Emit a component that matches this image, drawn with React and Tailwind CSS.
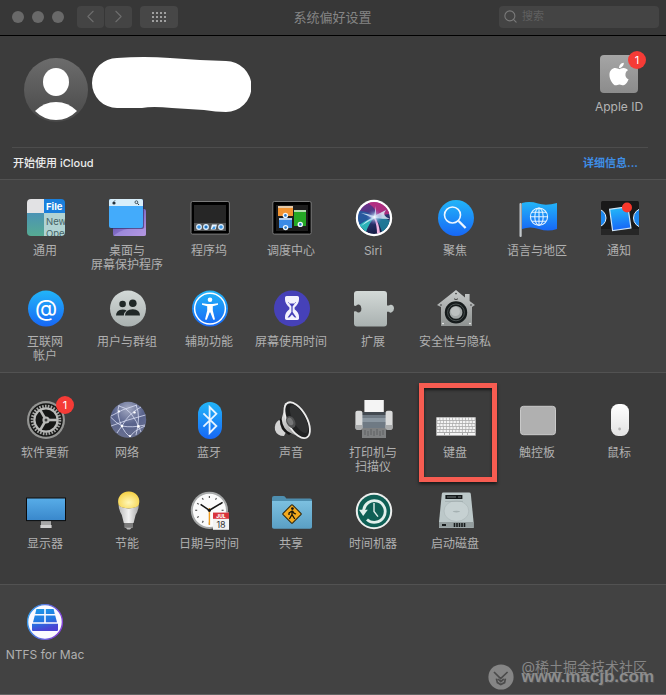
import { FaApple } from 'react-icons/fa';
import { ChevronLeft, ChevronRight, Search } from 'lucide-react';

const svgProps = { viewBox: '0 0 40 40', className: 'w-10 h-10 overflow-visible', 'aria-hidden': true };

function polar(cx, cy, r, deg) {
  const a = (deg * Math.PI) / 180;
  return [cx + r * Math.sin(a), cy - r * Math.cos(a)];
}

function BlueGradient({ id }) {
  return (
    <linearGradient id={id} x1="0" y1="0" x2="0" y2="1">
      <stop offset="0" stopColor="#22b5f8" />
      <stop offset="1" stopColor="#1767f6" />
    </linearGradient>
  );
}

function GrayGradient({ id }) {
  return (
    <linearGradient id={id} x1="0" y1="0" x2="0" y2="1">
      <stop offset="0" stopColor="#d3d9d7" />
      <stop offset="1" stopColor="#a9b1b0" />
    </linearGradient>
  );
}

function GeneralIcon() {
  return (
    <svg {...svgProps}>
      <defs>
        <clipPath id="general-clip"><rect x="1" y="1" width="38" height="37" rx="4" /></clipPath>
        <linearGradient id="general-left" x1="0" y1="0" x2="0" y2="1">
          <stop offset="0" stopColor="#4b93b4" />
          <stop offset="1" stopColor="#56ab93" />
        </linearGradient>
      </defs>
      <g clipPath="url(#general-clip)">
        <rect x="1" y="1" width="17" height="14" fill="#e2e2e4" />
        <rect x="18" y="1" width="21" height="14" fill="#1a7fdc" />
        <rect x="1" y="15" width="17" height="23" fill="url(#general-left)" />
        <rect x="18" y="15" width="21" height="23" fill="#b1d3d3" />
        <g fontFamily="Inter, sans-serif" fontSize="9.5">
          <text x="20" y="12" fill="#fff" fontWeight="700">File</text>
          <text x="20" y="27" fill="#476466">New</text>
          <text x="20" y="39" fill="#476466">Open</text>
        </g>
      </g>
    </svg>
  );
}

function DesktopIcon() {
  return (
    <svg {...svgProps}>
      <defs>
        <linearGradient id="desk-back" x1="0" y1="0" x2="1" y2="1">
          <stop offset="0" stopColor="#4b3f99" />
          <stop offset="0.6" stopColor="#8d76cf" />
          <stop offset="1" stopColor="#c193dc" />
        </linearGradient>
      </defs>
      <rect x="5" y="11" width="33" height="27" rx="2" fill="url(#desk-back)" />
      <path d="M5 38 Q16 28 38 30 V36 Q38 38 36 38Z" fill="#ab9ae4" opacity=".6" />
      <rect x="2" y="2" width="34" height="29" rx="2" fill="#2b2860" opacity=".6" />
      <rect x="1" y="1" width="34" height="29" rx="2" fill="#43abfb" />
      <path d="M3 1H33Q35 1 35 3V8H1V3Q1 1 3 1Z" fill="#d8eefa" />
      <circle cx="6" cy="5" r="1.6" fill="#25323c" />
      <path d="M6 3.4 7 2.4" stroke="#25323c" strokeWidth=".8" />
      <circle cx="28.4" cy="4.2" r="1.4" fill="none" stroke="#25323c" strokeWidth=".8" />
      <path d="M29.5 5.3 31 7" stroke="#25323c" strokeWidth="1" />
    </svg>
  );
}

function DockIcon() {
  return (
    <svg {...svgProps}>
      <rect x="1" y="3.5" width="38.4" height="32.6" rx="1.5" fill="#000" stroke="#7b7b7b" />
      <rect x="4" y="7" width="32" height="26" fill="#262626" />
      <rect x="4" y="25" width="32" height="8" fill="#545657" />
      {[9, 16, 31].map((x) => (
        <g key={x}>
          <circle cx={x} cy="29" r="2.9" fill="#e6f3ff" />
          <circle cx={x} cy="29" r="1.8" fill="#3c97e6" />
        </g>
      ))}
      <circle cx="16" cy="29" r="1" fill="#1c5f9f" />
      <path d="M22 26.5H27L25.6 31.6H20.6Z" fill="#e6f3ff" />
      <path d="M23.4 28.6H25.6L24.8 31H22Z" fill="#3c97e6" />
    </svg>
  );
}

function MissionIcon() {
  return (
    <svg {...svgProps}>
      <rect x=".8" y="3.5" width="38.4" height="32.6" rx="1.5" fill="#000" stroke="#7b7b7b" />
      <rect x="4" y="7" width="32" height="26" fill="#1d1d1d" />
      <rect x="6" y="8" width="15" height="10" fill="#f19331" />
      <rect x="6" y="8" width="15" height="2" fill="#e3c9a9" />
      <rect x="7" y="20" width="13" height="10" fill="#3a8ae6" />
      <rect x="7" y="20" width="13" height="2" fill="#b5cfec" />
      <rect x="22" y="12" width="12" height="16" fill="#25a825" />
      <rect x="22" y="12" width="12" height="2" fill="#b5dcb0" />
      {[[13.4, 17.4], [13.6, 29.6], [28.3, 26.4]].map(([x, y]) => (
        <g key={x}>
          <circle cx={x} cy={y} r="2.7" fill="#eef6fd" />
          <circle cx={x} cy={y} r="1.3" fill="#2a7cc9" />
        </g>
      ))}
    </svg>
  );
}

function SiriIcon() {
  return (
    <svg {...svgProps}>
      <defs>
        <radialGradient id="siri-core" cx=".5" cy=".5" r=".5">
          <stop offset="0" stopColor="#fff" />
          <stop offset=".35" stopColor="#c8d7f5" stopOpacity=".6" />
          <stop offset="1" stopColor="#6b5bd0" stopOpacity="0" />
        </radialGradient>
        <linearGradient id="siri-bg" x1=".2" y1="0" x2=".6" y2="1">
          <stop offset="0" stopColor="#7a2b8c" />
          <stop offset=".45" stopColor="#35407f" />
          <stop offset="1" stopColor="#131a42" />
        </linearGradient>
        <clipPath id="siri-clip"><circle cx="20" cy="20" r="16" /></clipPath>
      </defs>
      <circle cx="20" cy="20" r="18.2" fill="#fff" />
      <g clipPath="url(#siri-clip)">
        <circle cx="20" cy="20" r="16" fill="url(#siri-bg)" />
        <path d="M12 4Q27 1 34 10Q36 13 35 16L21 18Q24 10 12 4Z" fill="#c72c80" opacity=".8" />
        <path d="M4 13Q13 12 20 19L7 29Q2 22 4 13Z" fill="#2260a5" opacity=".8" />
        <path d="M5 27Q14 21 21 19Q15 25 12 34Z" fill="#2bc9c4" opacity=".85" />
        <path d="M21 19Q31 19 36 23Q33 32 28 34Q26 26 21 19Z" fill="#1f8ba5" opacity=".8" />
        <path d="M21 19Q25 25 26 35L23 36Q23 27 20 20Z" fill="#f1b5e2" />
        <path d="M7 15Q15 16 20 18L22 8 22 17 32 12Q27 18 36 21Q27 21 21 20Q13 24 7 28Q13 22 18 20Q13 17 7 15Z" fill="#d9f0fa" opacity=".85" />
        <circle cx="20.5" cy="19" r="8" fill="url(#siri-core)" />
      </g>
    </svg>
  );
}

function SpotlightIcon() {
  return (
    <svg {...svgProps}>
      <defs><BlueGradient id="spot-bg" /></defs>
      <circle cx="20" cy="20" r="18" fill="url(#spot-bg)" />
      <g fill="none" stroke="#eef6ff">
        <circle cx="16.5" cy="17" r="8" strokeWidth="1.6" />
        <path d="M22.6 23 29.6 30" strokeWidth="2.4" />
      </g>
    </svg>
  );
}

function LanguageIcon() {
  return (
    <svg {...svgProps}>
      <defs><BlueGradient id="flag-bg" /></defs>
      <rect x="1.5" y="5" width="2.2" height="34" rx="1" fill="#c3c8cb" />
      <path d="M4 6Q12 4 20 6.5T39 6V32Q30 35 21 32T4 32Z" transform="translate(0 -1)" fill="url(#flag-bg)" />
      <g fill="none" stroke="#e3f2ff" strokeWidth="1.1">
        <circle cx="21" cy="18.7" r="8.6" />
        <ellipse cx="21" cy="18.7" rx="4.2" ry="8.6" />
        <path d="M21 10V27.4M12.4 18.7H29.6M13.8 14.2H28.2M13.8 23.2H28.2" />
      </g>
    </svg>
  );
}

function NotificationIcon() {
  return (
    <svg {...svgProps}>
      <defs>
        <BlueGradient id="notif-bg" />
        <clipPath id="notif-clip"><rect x="1" y="3" width="38" height="34" rx="1.5" /></clipPath>
      </defs>
      <g clipPath="url(#notif-clip)">
        <rect x="1" y="3" width="38" height="34" fill="#191919" />
        <rect x="1" y="31" width="38" height="6" fill="#262626" />
        <circle cx="-3" cy="20" r="9" fill="#1c87ef" stroke="#e1edf8" strokeWidth="1" />
        <circle cx="43" cy="20" r="9.5" fill="#1c87ef" stroke="#e1edf8" strokeWidth="1" />
        <rect x="11" y="10" width="18.5" height="21.5" fill="url(#notif-bg)" stroke="#cfe4f5" strokeWidth="1.2" transform="rotate(-8 20 20.6)" />
      </g>
      <circle cx="27" cy="9.5" r="5" fill="#f8382c" />
    </svg>
  );
}

function InternetIcon() {
  return (
    <svg {...svgProps}>
      <defs><BlueGradient id="at-bg" /></defs>
      <circle cx="20" cy="19.6" r="18" fill="url(#at-bg)" />
      <text x="20" y="27" textAnchor="middle" fontFamily="Inter, sans-serif" fontSize="23" fill="#fff">@</text>
    </svg>
  );
}

function UsersIcon() {
  return (
    <svg {...svgProps}>
      <defs><GrayGradient id="users-bg" /></defs>
      <circle cx="20" cy="19.6" r="18" fill="url(#users-bg)" />
      <g fill="#202827">
        <circle cx="14.6" cy="15" r="3.3" />
        <path d="M8 26.5Q8 21 14.6 20.4Q17 20.4 18.6 21.6Q16 23.4 15.8 26.5Z" />
        <circle cx="24.8" cy="14.2" r="3.8" />
        <path d="M17 26.6Q17 20.6 24.8 20.2Q32 20.6 32 26.6Z" />
      </g>
    </svg>
  );
}

function AccessibilityIcon() {
  return (
    <svg {...svgProps}>
      <defs><BlueGradient id="access-bg" /></defs>
      <circle cx="20" cy="19.6" r="18" fill="url(#access-bg)" />
      <circle cx="20" cy="19.6" r="15.4" fill="none" stroke="#fff" strokeWidth="1.5" />
      <circle cx="20" cy="10.8" r="2.3" fill="#fff" />
      <path d="M12 14.2 17.6 15H22.4L28 14.2V15.8L22.8 17.2V21.6L25 30.4 23.2 30.8 20.4 23.6H19.6L16.8 30.8 15 30.4 17.2 21.6V17.2L12 15.8Z" fill="#fff" />
    </svg>
  );
}

function ScreenTimeIcon() {
  return (
    <svg {...svgProps}>
      <circle cx="20" cy="19.4" r="18" fill="#4641b8" />
      <path d="M13 8.6Q13 7 14.6 7H25.4Q27 7 27 8.6V10.6Q27 14.6 22.6 18.4V20.2Q27 23.4 27 28V29.6Q27 31 25.4 31H14.6Q13 31 13 29.6V28Q13 23.4 17.4 20.2V18.4Q13 14.6 13 10.6Z" fill="#f3f2fd" />
      <path d="M16 13H24L20.6 17.4V23L24.4 28.6H15.6L19.4 23V17.4Z" fill="#4641b8" />
      <path d="M16 12H24L22.6 14.6H17.4ZM17 29 20 25.6 23 29Z" fill="#f3f2fd" />
    </svg>
  );
}

function ExtensionIcon() {
  return (
    <svg {...svgProps}>
      <defs><GrayGradient id="ext-bg" /></defs>
      <path
        d="M3 2H30Q33 2 33 5V16.5H35Q36 15.5 37.3 15.8Q40 16.6 40 19.6T37.3 23.6Q36 24 35 22.8H33V34.6Q33 37.6 30 37.6H3Q0 37.6 0 34.6V22.6Q2 21.8 2.4 22.6Q4 24.2 6 23Q7.6 21.8 7.4 19.4Q7.2 16.4 5 15.6Q3.6 15.2 2.4 16.6Q1.6 17.4 0 16.6V5Q0 2 3 2Z"
        fill="url(#ext-bg)"
      />
    </svg>
  );
}

function SecurityIcon() {
  return (
    <svg {...svgProps}>
      <defs>
        <linearGradient id="house-bg" x1="0" y1="0" x2="0" y2="1">
          <stop offset="0" stopColor="#c6c9c9" />
          <stop offset="1" stopColor="#8e9291" />
        </linearGradient>
      </defs>
      <path d="M20 1 29 8.4V5H33.6V12L39 16 36 18V37H5V18L1 16Z" fill="url(#house-bg)" />
      <g fill="#333">
        <circle cx="20" cy="4.6" r=".8" />
        <circle cx="5" cy="16" r=".8" />
        <circle cx="35" cy="16" r=".8" />
      </g>
      <g fill="#fff">
        <circle cx="7" cy="34.6" r=".8" />
        <circle cx="34" cy="34.6" r=".8" />
      </g>
      <path d="M18 9.8Q20 11.4 22 9.8" fill="none" stroke="#444" />
      <circle cx="20" cy="23.4" r="11.2" fill="#151a1b" />
      <circle cx="20" cy="23.4" r="8.4" fill="none" stroke="#4b5252" strokeWidth="1" />
      <circle cx="20" cy="23.4" r="6.4" fill="#a3a8a8" />
      <circle cx="19.4" cy="22.4" r="4.6" fill="#bcc0c0" />
    </svg>
  );
}

function UpdateIcon() {
  return (
    <svg {...svgProps}>
      <circle cx="20" cy="20" r="19" fill="#949593" />
      <circle cx="20" cy="20" r="16.8" fill="#161716" />
      <circle cx="20" cy="20" r="13.8" fill="none" stroke="#a5a6a4" strokeWidth="3" strokeDasharray="1.6 1.29" />
      <circle cx="20" cy="20" r="11.6" fill="none" stroke="#b9bab8" strokeWidth="2.2" />
      {[90, 210, 330].map((deg) => {
        const [x, y] = polar(20, 20, 11.5, deg);
        return <line key={deg} x1="20" y1="20" x2={x} y2={y} stroke="#b9bab8" strokeWidth="2.6" />;
      })}
      <circle cx="20" cy="20" r="3.6" fill="#b9bab8" />
      <circle cx="20" cy="20" r="1.5" fill="#3a3b3a" />
    </svg>
  );
}

function NetworkIcon() {
  return (
    <svg {...svgProps}>
      <defs>
        <radialGradient id="net-bg" cx=".5" cy=".2" r=".85">
          <stop offset="0" stopColor="#a3a9c2" />
          <stop offset=".5" stopColor="#59638c" />
          <stop offset="1" stopColor="#6a7190" />
        </radialGradient>
      </defs>
      <circle cx="20.2" cy="19.8" r="18" fill="url(#net-bg)" />
      <g fill="none" stroke="#d9def4" strokeWidth=".8">
        <path d="M11 5Q8 14 14 27Q17 33 22 37M3 16Q14 9 29 5M11 6Q24 8 33 32M2.5 17Q8 23 14 26Q24 28 37 25M14 26Q20 14 33 7M28 5Q33 16 28 35M3 26Q18 20 37.5 15M14 26Q11 30 9 33M22 37Q25 31 37 26" />
      </g>
      <g fill="#fff">
        <circle cx="14" cy="26" r="1.3" />
        <circle cx="26.5" cy="12.4" r="1.2" />
        <circle cx="30.4" cy="26.4" r="1.3" />
        <circle cx="11" cy="11.4" r="1.1" />
        <circle cx="22" cy="36" r="1.1" />
      </g>
    </svg>
  );
}

function BluetoothIcon() {
  return (
    <svg {...svgProps}>
      <defs><BlueGradient id="bt-bg" /></defs>
      <rect x="8" y="2" width="24" height="37" rx="12" fill="url(#bt-bg)" />
      <path d="M13.4 13.4 26.4 26 19.6 33V7L26.4 13.8 13.4 26.6" fill="none" stroke="#e8f4ff" strokeWidth="1.8" />
    </svg>
  );
}

function SoundIcon() {
  return (
    <svg {...svgProps}>
      <defs>
        <linearGradient id="snd-cone" x1="0" y1="0" x2="1" y2="1">
          <stop offset="0" stopColor="#f5f5f5" />
          <stop offset=".5" stopColor="#b5b5b5" />
          <stop offset="1" stopColor="#777" />
        </linearGradient>
      </defs>
      <path d="M7 20Q2 23 3 30Q5 36 12 36L16 28Z" fill="#d3d3d3" />
      <path d="M8 19Q7 30 17 35L20 33 12 16Z" fill="#151515" />
      <path d="M13 3Q12 12 9.6 19Q11 30 18.6 33L32 39 25 12Z" fill="url(#snd-cone)" />
      <ellipse cx="25.2" cy="20.2" rx="9.6" ry="19.8" fill="#202122" stroke="#ececec" strokeWidth="1.8" transform="rotate(-29 25.2 20.2)" />
      <ellipse cx="27" cy="19" rx="6" ry="15.6" fill="#303132" transform="rotate(-29 27 19)" />
      <ellipse cx="18.8" cy="22" rx="4.2" ry="6.4" fill="#505152" transform="rotate(-29 18.8 22)" />
      <ellipse cx="18.2" cy="21.4" rx="2.6" ry="4" fill="#777879" transform="rotate(-29 18.2 21.4)" />
    </svg>
  );
}

function PrinterIcon() {
  return (
    <svg {...svgProps}>
      <rect x="8" y="24" width="24" height="14" fill="#7e8081" />
      <rect x="10" y="24" width="20" height="4" fill="#45484b" />
      <path d="M11 30V35M14 31V36M17 29V35M20 31V36M23 29V35M26 31V36M29 30V35" stroke="#5f6162" strokeWidth="1" />
      <rect x="10.4" y="0" width="19.4" height="14" fill="#f4f4f4" />
      <rect x="7" y="12" width="26" height="16" fill="#6f7a84" />
      <rect x="7" y="12" width="26" height="3" fill="#434a51" />
      <rect x="7" y="18" width="26" height="4" fill="#8b97a1" />
      <rect x="1.4" y="10.8" width="7" height="19" rx="2" fill="#dadbdb" />
      <rect x="31.6" y="10.8" width="7" height="19" rx="2" fill="#dadbdb" />
      <path d="M1.4 25H8.4V28Q8.4 29.8 6.4 29.8H3.4Q1.4 29.8 1.4 28ZM31.6 25H38.6V28Q38.6 29.8 36.6 29.8H33.6Q31.6 29.8 31.6 28Z" fill="#a9abac" />
    </svg>
  );
}

function KeyboardIcon() {
  const rows = [0, 1, 2, 3, 4];
  const cols = [0, 1, 2, 3, 4, 5, 6, 7, 8, 9, 10, 11];
  return (
    <svg {...svgProps}>
      <rect x="0" y="17" width="40" height="19" rx="1" fill="#a9a9a9" />
      {rows.map((r) => cols.map((c) => (
        <rect key={r + '-' + c} x={1 + c * 3.2 + (r % 2) * 0.4} y={17.8 + r * 3} width="2.5" height="2.2" fill="#f4f4f4" />
      )))}
      <path d="M1 33H8V35H1ZM9 33H13V35H9ZM14 33H26V35H14ZM27 33H31V35H27ZM32 33H39V35H32Z" fill="#f4f4f4" />
    </svg>
  );
}

function TrackpadIcon() {
  return (
    <svg {...svgProps}>
      <rect x="2.5" y="6.3" width="35" height="28.4" rx="3" fill="#b0b0b0" stroke="#c9c9c9" />
    </svg>
  );
}

function MouseIcon() {
  return (
    <svg {...svgProps}>
      <defs>
        <linearGradient id="mouse-bg" x1="0" y1="0" x2="0" y2="1">
          <stop offset="0" stopColor="#fff" />
          <stop offset="1" stopColor="#e3e3e3" />
        </linearGradient>
      </defs>
      <rect x="11" y="4" width="18" height="32" rx="7.5" fill="url(#mouse-bg)" />
      <circle cx="19.6" cy="29" r="1.4" fill="#b5b5b5" />
    </svg>
  );
}

function DisplayIcon() {
  return (
    <svg {...svgProps}>
      <defs>
        <linearGradient id="disp-bg" x1="0" y1="0" x2="0" y2="1">
          <stop offset="0" stopColor="#58ade8" />
          <stop offset="1" stopColor="#3987cb" />
        </linearGradient>
      </defs>
      <rect x="15" y="30" width="10" height="5" fill="#a7a7a7" />
      <rect x="14.4" y="34" width="11.2" height="3" fill="#d0d0d0" />
      <rect x=".5" y="7" width="39" height="22.6" fill="url(#disp-bg)" stroke="#0c0c0c" />
    </svg>
  );
}

function EnergyIcon() {
  return (
    <svg {...svgProps}>
      <defs>
        <radialGradient id="bulb-glow" cx=".5" cy=".65" r=".6">
          <stop offset="0" stopColor="#fff7b8" />
          <stop offset="1" stopColor="#f6d34a" />
        </radialGradient>
        <linearGradient id="bulb-body" x1="0" y1="0" x2="1" y2="0">
          <stop offset="0" stopColor="#b8b8b8" />
          <stop offset=".5" stopColor="#f2f2f2" />
          <stop offset="1" stopColor="#a8a8a8" />
        </linearGradient>
      </defs>
      <rect x="16.4" y="31" width="8.6" height="6" rx="1" fill="#8e8e8e" />
      <path d="M16.4 33H25M16.4 35H25" stroke="#5d5d5d" strokeWidth=".8" />
      <path d="M18 37H23.4L22 38.6H19.4Z" fill="#bbb" />
      <path d="M10.6 14Q13 17 20.6 17.4Q28.4 17 30.8 14Q30.6 19 27.6 24L25.6 32H15.8L13.8 24Q10.8 19 10.6 14Z" fill="url(#bulb-body)" />
      <path d="M20.7.4A10.3 10.3 0 0 1 30.8 14Q28.4 17.2 20.7 17.4Q13 17.2 10.6 14A10.3 10.3 0 0 1 20.7.4Z" fill="url(#bulb-glow)" />
    </svg>
  );
}

function DateTimeIcon() {
  const hours = [0, 1, 2, 3, 4, 5, 6, 7, 8, 9, 10, 11];
  return (
    <svg {...svgProps}>
      <circle cx="19.4" cy="19.3" r="18.6" fill="#a7a9a9" />
      <circle cx="19.4" cy="19.3" r="16.6" fill="#fbfbfb" />
      {hours.map((h) => {
        const [x1, y1] = polar(19.4, 19.3, 12.2, h * 30);
        const [x2, y2] = polar(19.4, 19.3, 14.2, h * 30);
        return <line key={h} x1={x1} y1={y1} x2={x2} y2={y2} stroke="#555" strokeWidth="1.2" />;
      })}
      <path d="M10.6 13.4 19.4 19.3 32.6 11.4" fill="none" stroke="#151515" strokeWidth="1.6" />
      <path d="M19.4 17V34" stroke="#ee9d22" strokeWidth="1.4" />
      <circle cx="19.4" cy="19.3" r="1.6" fill="#151515" />
      <rect x="23" y="21.6" width="16" height="17.2" fill="#f2f2f2" />
      <rect x="23" y="21.6" width="16" height="6.2" fill="#d8343c" />
      <text x="31" y="26.8" textAnchor="middle" fontFamily="Inter, sans-serif" fontSize="5" fontWeight="800" fill="#fff">JUL</text>
      <text x="31" y="36.6" textAnchor="middle" fontFamily="Inter, sans-serif" fontSize="9" fill="#333">18</text>
    </svg>
  );
}

function SharingIcon() {
  return (
    <svg {...svgProps}>
      <defs>
        <linearGradient id="folder-bg" x1="0" y1="0" x2="0" y2="1">
          <stop offset="0" stopColor="#7cc0e0" />
          <stop offset="1" stopColor="#5a9fc4" />
        </linearGradient>
      </defs>
      <path d="M0 7Q0 5 2 5H11Q12.6 5 13.6 6.4L14.4 7.6H38Q40 7.6 40 9.6V14H0Z" fill="#4e8eaf" />
      <path d="M0 10H40V36Q40 37.8 38 37.8H2Q0 37.8 0 36Z" fill="url(#folder-bg)" />
      <rect x="13.2" y="16.2" width="13.6" height="13.6" rx="1" fill="#f3a91d" stroke="#2c2510" strokeWidth="1" transform="rotate(45 20 23)" />
      <circle cx="20.4" cy="17.6" r="1.4" fill="#16140c" />
      <path d="M20 19.4V23.6L17.4 28M20 23.6 22.8 28M20 20 17 22V24M20.4 20 22.2 22.4 24 23" fill="none" stroke="#16140c" strokeWidth="1.3" />
    </svg>
  );
}

function TimeMachineIcon() {
  return (
    <svg {...svgProps}>
      <circle cx="20" cy="20" r="18.2" fill="#eef0ef" />
      <circle cx="20" cy="20" r="16.2" fill="#0f5f55" />
      <path d="M9.6 19.6A10.8 10.8 0 1 1 13 28.4" fill="none" stroke="#e2efec" strokeWidth="2.8" />
      <path d="M5 18.8H13.8L9.2 25Z" fill="#e2efec" />
      <path d="M20 12V20.4L24 25.6" fill="none" stroke="#e2efec" strokeWidth="1.4" />
    </svg>
  );
}

function StartupDiskIcon() {
  return (
    <svg {...svgProps}>
      <path d="M7.4 1.6H33Q34.6 1.6 34.8 3L37.6 31V37H3V31L5.8 3Q6 1.6 7.4 1.6Z" fill="#bcc8c9" />
      <path d="M3 31H37.6V36.8H3Z" fill="#939d9e" />
      <ellipse cx="20.4" cy="20" rx="12.4" ry="10.4" fill="#c6d1d2" stroke="#adb9ba" strokeWidth=".7" />
      <ellipse cx="20.4" cy="20.6" rx="3.6" ry=".8" fill="#a5b1b2" />
      <rect x="9.4" y="4" width="17" height="4" fill="#14191a" />
      <path d="M11 6H20M22 6H25" stroke="#8c9697" strokeWidth=".8" />
      <path d="M9 10.4H27" stroke="#9ca8a9" strokeWidth=".7" />
      <path d="M18.5 32V36M21 32V36M23.5 32V36M26 32V36M28.5 32V36" stroke="#171b1c" strokeWidth="1.6" />
      <path d="M6 33H10V35H6Z" fill="#171b1c" />
    </svg>
  );
}

function NtfsIcon() {
  return (
    <svg {...svgProps}>
      <defs>
        <linearGradient id="ntfs-ring" x1="0" y1="0" x2="1" y2=".3">
          <stop offset="0" stopColor="#2aa4ef" />
          <stop offset="1" stopColor="#8244d8" />
        </linearGradient>
        <linearGradient id="ntfs-disk" x1="0" y1="0" x2=".3" y2="1">
          <stop offset="0" stopColor="#1e9be8" />
          <stop offset=".6" stopColor="#2377e2" />
          <stop offset="1" stopColor="#4b42d3" />
        </linearGradient>
      </defs>
      <circle cx="19" cy="20" r="17.4" fill="#fbfaff" stroke="url(#ntfs-ring)" strokeWidth="1.4" />
      <path d="M10.4 7H18.2V12H9.2ZM19.8 7H27.6L28.8 12H19.8ZM8.8 13.4H18.2V20.2H7ZM19.8 13.4H29.2L31 20.2H19.8ZM6 21.8H32V28Q32 29 31 29H7Q6 29 6 28Z" fill="url(#ntfs-disk)" />
    </svg>
  );
}

const personal = [
  { label: ['通用'], icon: GeneralIcon },
  { label: ['桌面与', '屏幕保护程序'], icon: DesktopIcon },
  { label: ['程序坞'], icon: DockIcon },
  { label: ['调度中心'], icon: MissionIcon },
  { label: ['Siri'], icon: SiriIcon },
  { label: ['聚焦'], icon: SpotlightIcon },
  { label: ['语言与地区'], icon: LanguageIcon },
  { label: ['通知'], icon: NotificationIcon },
  { label: ['互联网', '帐户'], icon: InternetIcon },
  { label: ['用户与群组'], icon: UsersIcon },
  { label: ['辅助功能'], icon: AccessibilityIcon },
  { label: ['屏幕使用时间'], icon: ScreenTimeIcon },
  { label: ['扩展'], icon: ExtensionIcon },
  { label: ['安全性与隐私'], icon: SecurityIcon },
];

const hardware = [
  { label: ['软件更新'], icon: UpdateIcon, badge: 1 },
  { label: ['网络'], icon: NetworkIcon },
  { label: ['蓝牙'], icon: BluetoothIcon },
  { label: ['声音'], icon: SoundIcon },
  { label: ['打印机与', '扫描仪'], icon: PrinterIcon },
  { label: ['键盘'], icon: KeyboardIcon, highlighted: true },
  { label: ['触控板'], icon: TrackpadIcon },
  { label: ['鼠标'], icon: MouseIcon },
  { label: ['显示器'], icon: DisplayIcon },
  { label: ['节能'], icon: EnergyIcon },
  { label: ['日期与时间'], icon: DateTimeIcon },
  { label: ['共享'], icon: SharingIcon },
  { label: ['时间机器'], icon: TimeMachineIcon },
  { label: ['启动磁盘'], icon: StartupDiskIcon },
];

const thirdParty = [{ label: ['NTFS for Mac'], icon: NtfsIcon }];

function Badge({ count }) {
  return (
    <span className="absolute -top-1 -right-2 w-[18px] h-[18px] rounded-full bg-[#f53b36] text-white text-[11px] leading-[18px] text-center">
      {count}
    </span>
  );
}

function PrefItem({ item }) {
  const Icon = item.icon;
  return (
    <button type="button" className="relative flex flex-col items-center gap-[6px] min-h-[74px] text-xs leading-[14px] text-[#b0b0b0]">
      <span className="relative">
        <Icon />
        {item.badge && <Badge count={item.badge} />}
      </span>
      <span className="pr-[2px] whitespace-nowrap">
        {item.label.map((line) => <span key={line} className="block">{line}</span>)}
      </span>
      {item.highlighted && (
        <span className="absolute -top-[17px] left-1 right-0 h-[99px] border-5 border-[#f75c51] shadow-[0_2px_3px_rgba(0,0,0,0.6),inset_0_2px_3px_rgba(0,0,0,0.6)]"></span>
      )}
    </button>
  );
}

function PrefGrid({ items, className }) {
  return (
    <section className={`grid grid-cols-8 gap-y-[17px] px-[5px] ${className}`}>
      {items.map((item) => <PrefItem key={item.label[0]} item={item} />)}
    </section>
  );
}

function TitleBar() {
  return (
    <header className="grid grid-cols-[1fr_auto_1fr] items-center h-9 pl-3 pr-[7px] pb-[2px] bg-[#373737] border-b border-black">
      <div className="flex items-center">
        <div className="flex gap-2">
          <button type="button" aria-label="关闭" className="w-3 h-3 rounded-full bg-[#696969]"></button>
          <button type="button" aria-label="最小化" className="w-3 h-3 rounded-full bg-[#696969]"></button>
          <button type="button" aria-label="缩放" className="w-3 h-3 rounded-full bg-[#696969]"></button>
        </div>
        <div className="flex gap-px ml-[13px] text-[#6e6e6e]">
          <button type="button" aria-label="后退" className="flex items-center justify-center w-[27px] h-[22px] rounded bg-[#444444]">
            <ChevronLeft size={21} strokeWidth={1.25} />
          </button>
          <button type="button" aria-label="前进" className="flex items-center justify-center w-[27px] h-[22px] rounded bg-[#444444]">
            <ChevronRight size={21} strokeWidth={1.25} />
          </button>
        </div>
        <button type="button" aria-label="显示全部" className="flex items-center justify-center w-[38px] h-[22px] ml-2 rounded bg-[#474747]">
          <svg viewBox="0 0 16 12" className="w-4 h-3" fill="#a0a0a0">
            {[1, 5, 9].map((y) => [1, 5, 9, 13].map((x) => <rect key={x + '-' + y} x={x} y={y} width="2" height="2" />))}
          </svg>
        </button>
      </div>
      <h1 className="pr-[6px] text-[13px] leading-4 text-[#858585]">系统偏好设置</h1>
      <label className="flex items-center justify-self-end w-40 h-[22px] px-1 gap-1 rounded bg-[#444444] text-[#7b7b7b]">
        <Search size={15} strokeWidth={1.75} className="shrink-0" />
        <input type="search" aria-label="搜索" placeholder="搜索" className="w-full min-w-0 text-[11px] outline-none placeholder:text-[#606060]" />
      </label>
    </header>
  );
}

function Account() {
  return (
    <section className="pl-3 pr-[18px] bg-[#3c3c3c] border-b border-[#525252]">
      <div className="flex items-start h-28 pl-3 pt-[18px] border-b border-[#4d4d4d]">
        <svg viewBox="0 0 64 64" className="w-16 h-16 mt-1" aria-hidden="true">
          <defs>
            <linearGradient id="avatar-bg" x1="0" y1="0" x2="0" y2="1">
              <stop offset="0" stopColor="#6c6c6c" />
              <stop offset="1" stopColor="#494949" />
            </linearGradient>
          </defs>
          <circle cx="32" cy="32" r="32" fill="url(#avatar-bg)" />
          <ellipse cx="32" cy="24" rx="13" ry="14" fill="#fff" />
          <path d="M11 53Q20 44 32 44T53 53Q44 62 32 62T11 53Z" fill="#fff" />
        </svg>
        <svg viewBox="0 0 159 55" className="w-[159px] h-[55px] ml-1 mt-[3px]" aria-hidden="true">
          <path d="M25 1Q52-1 78 1L108 3 134 4A25 25 0 0 1 134 55Q124 55 112 53L80 51Q60 49 50 51H25A25 25 0 0 1 25 1Z" fill="#fff" />
        </svg>
        <button type="button" className="flex flex-col items-center gap-[7px] ml-auto -mr-1 w-[66px] text-xs leading-[14px] text-[#b4b4b4]">
          <span className="relative flex items-center justify-center w-[38px] h-[38px] mt-px rounded bg-linear-to-b from-[#a5a5a5] to-[#8c8c8c]">
            <FaApple size={26} color="#fff" />
            <Badge count={1} />
          </span>
          <span>Apple ID</span>
        </button>
      </div>
      <div className="flex items-center justify-between h-[31px] pl-px pr-[10px] text-[11px] font-bold">
        <p className="text-[#ececec] font-medium">开始使用 iCloud</p>
        <a href="#icloud" className="text-[#3e8ee6]">详细信息...</a>
      </div>
    </section>
  );
}

function Watermark() {
  return (
    <div className="absolute right-3 bottom-1 flex items-end gap-[7px] text-[#8d8d8d] pointer-events-none">
      <svg viewBox="0 0 26 26" className="w-[26px] h-[26px]" aria-hidden="true">
        <circle cx="13" cy="13" r="12.6" fill="#858585" />
        <path d="M6 8 12.6 14.6 19.6 8M8.4 14.6 9.4 18.6 12.8 20.6 16.6 18.6 17.4 14.6M10 15 12.8 17.6 15.8 15" fill="none" stroke="#4b4b4b" strokeWidth="1.7" />
      </svg>
      <div className="relative pb-[3px]">
        <span className="absolute left-0 -top-2 text-sm leading-4 whitespace-nowrap text-[#868686]">@稀土掘金技术社区</span>
        <span className="relative block font-['Liberation_Sans',Arial,sans-serif] text-[17px] leading-5 font-bold [text-shadow:1px_1px_1px_#555]">www.macjb.com</span>
      </div>
    </div>
  );
}

export default function App() {
  return (
    <main className="relative flex flex-col min-h-screen bg-[#424242] border-b border-[#626262] font-['Inter','Noto_Sans_CJK_SC',sans-serif]">
      <TitleBar />
      <Account />
      <PrefGrid items={personal} className="pt-[18px] pb-[9px] bg-[#424242] border-b border-[#525252]" />
      <PrefGrid items={hardware} className="pt-[27px] pb-[19px] bg-[#3c3c3c] border-b border-[#525252]" />
      <PrefGrid items={thirdParty} className="pt-[17px] pb-4" />
      <Watermark />
    </main>
  );
}
